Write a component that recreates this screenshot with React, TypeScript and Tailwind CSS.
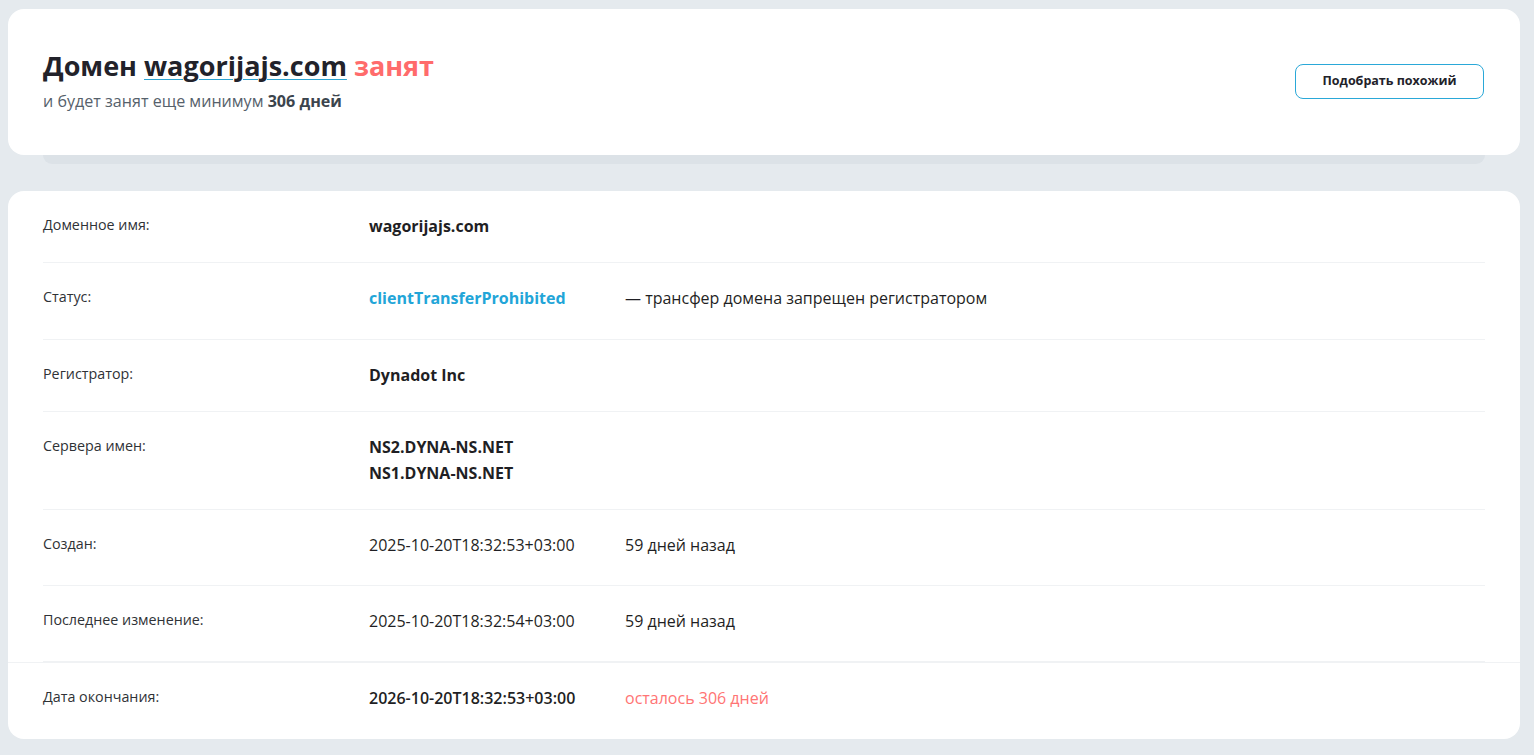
const font = { fontFamily: '"Open Sans", "Noto Sans", sans-serif' };

type Row = {
  label: string;
  values: string[];
  extra?: string;
  valueClass?: string;
  extraClass?: string;
};

const rows: Row[] = [
  { label: "Доменное имя:", values: ["wagorijajs.com"], valueClass: "font-bold text-[#1f1f24]" },
  {
    label: "Статус:",
    values: ["clientTransferProhibited"],
    valueClass: "font-bold text-[#22a5d8]",
    extra: "— трансфер домена запрещен регистратором",
    extraClass: "pb-[5px] text-[#1f1f24]",
  },
  { label: "Регистратор:", values: ["Dynadot Inc"], valueClass: "font-bold text-[#1f1f24]" },
  {
    label: "Сервера имен:",
    values: ["NS2.DYNA-NS.NET", "NS1.DYNA-NS.NET"],
    valueClass: "font-bold text-[#1f1f24]",
  },
  {
    label: "Создан:",
    values: ["2025-10-20T18:32:53+03:00"],
    valueClass: "text-[#1f1f24]",
    extra: "59 дней назад",
  },
  {
    label: "Последнее изменение:",
    values: ["2025-10-20T18:32:54+03:00"],
    valueClass: "text-[#1f1f24]",
    extra: "59 дней назад",
  },
];

function InfoRow({ row, last }: { row: Row; last?: boolean }) {
  return (
    <div className={`flex pt-[22px] pb-[23px] ${last ? "" : "border-b border-[#f0f2f4]"}`}>
      <div className="w-[326px] shrink-0 text-[14.3px] leading-[24px] text-[#2f3236]">{row.label}</div>
      <div className={`w-[256px] shrink-0 text-[16px] leading-[26px] ${row.valueClass ?? ""}`}>
        {row.values.map((v) => (
          <div key={v}>{v}</div>
        ))}
      </div>
      {row.extra && (
        <div className={`text-[16px] leading-[26px] ${row.extraClass ?? "pb-[4px] text-[#1f1f24]"}`}>{row.extra}</div>
      )}
    </div>
  );
}

export default function App() {
  return (
    <div style={font} className="min-h-screen bg-[#e5eaee] pt-[9px] pl-2 pr-[14px] pb-4">
      <div>
        <div className="flex items-center justify-between rounded-2xl bg-white pl-[35px] pr-[36px] pt-[39px] pb-[43px]">
          <div>
            <h1 className="text-[27px] leading-[36px] font-bold text-[#22222a]">
              Домен{" "}
              <span className="underline decoration-[#2ba3d1] decoration-1 underline-offset-[3px]">wagorijajs.com</span>{" "}
              <span className="text-[#ff6b6b]">занят</span>
            </h1>
            <p className="mt-[6px] text-[16.1px] leading-[22px] text-[#56616b]">
              и будет занят еще минимум <span className="font-bold text-[#3b444d]">306 дней</span>
            </p>
          </div>
          <button className="mt-[2px] w-[189px] h-[35px] rounded-lg border border-[#2aa8d8] bg-white text-[12.5px] font-bold text-[#22222a]">
            Подобрать похожий
          </button>
        </div>
        <div className="mx-[35px] h-[9px] rounded-b-xl bg-[#dce2e7]" />
      </div>

      <div className="mt-[27px] rounded-2xl bg-white">
        <div className="px-[35px]">
          {rows.map((r) => (
            <InfoRow key={r.label} row={r} />
          ))}
        </div>
        <div className="border-t border-[#f0f2f4] px-[35px]">
          <InfoRow
            last
            row={{
              label: "Дата окончания:",
              values: ["2026-10-20T18:32:53+03:00"],
              valueClass: "font-semibold text-[#1f1f24]",
              extra: "осталось 306 дней",
              extraClass: "pb-[5px] text-[#ff7474]",
            }}
          />
        </div>
      </div>
    </div>
  );
}
